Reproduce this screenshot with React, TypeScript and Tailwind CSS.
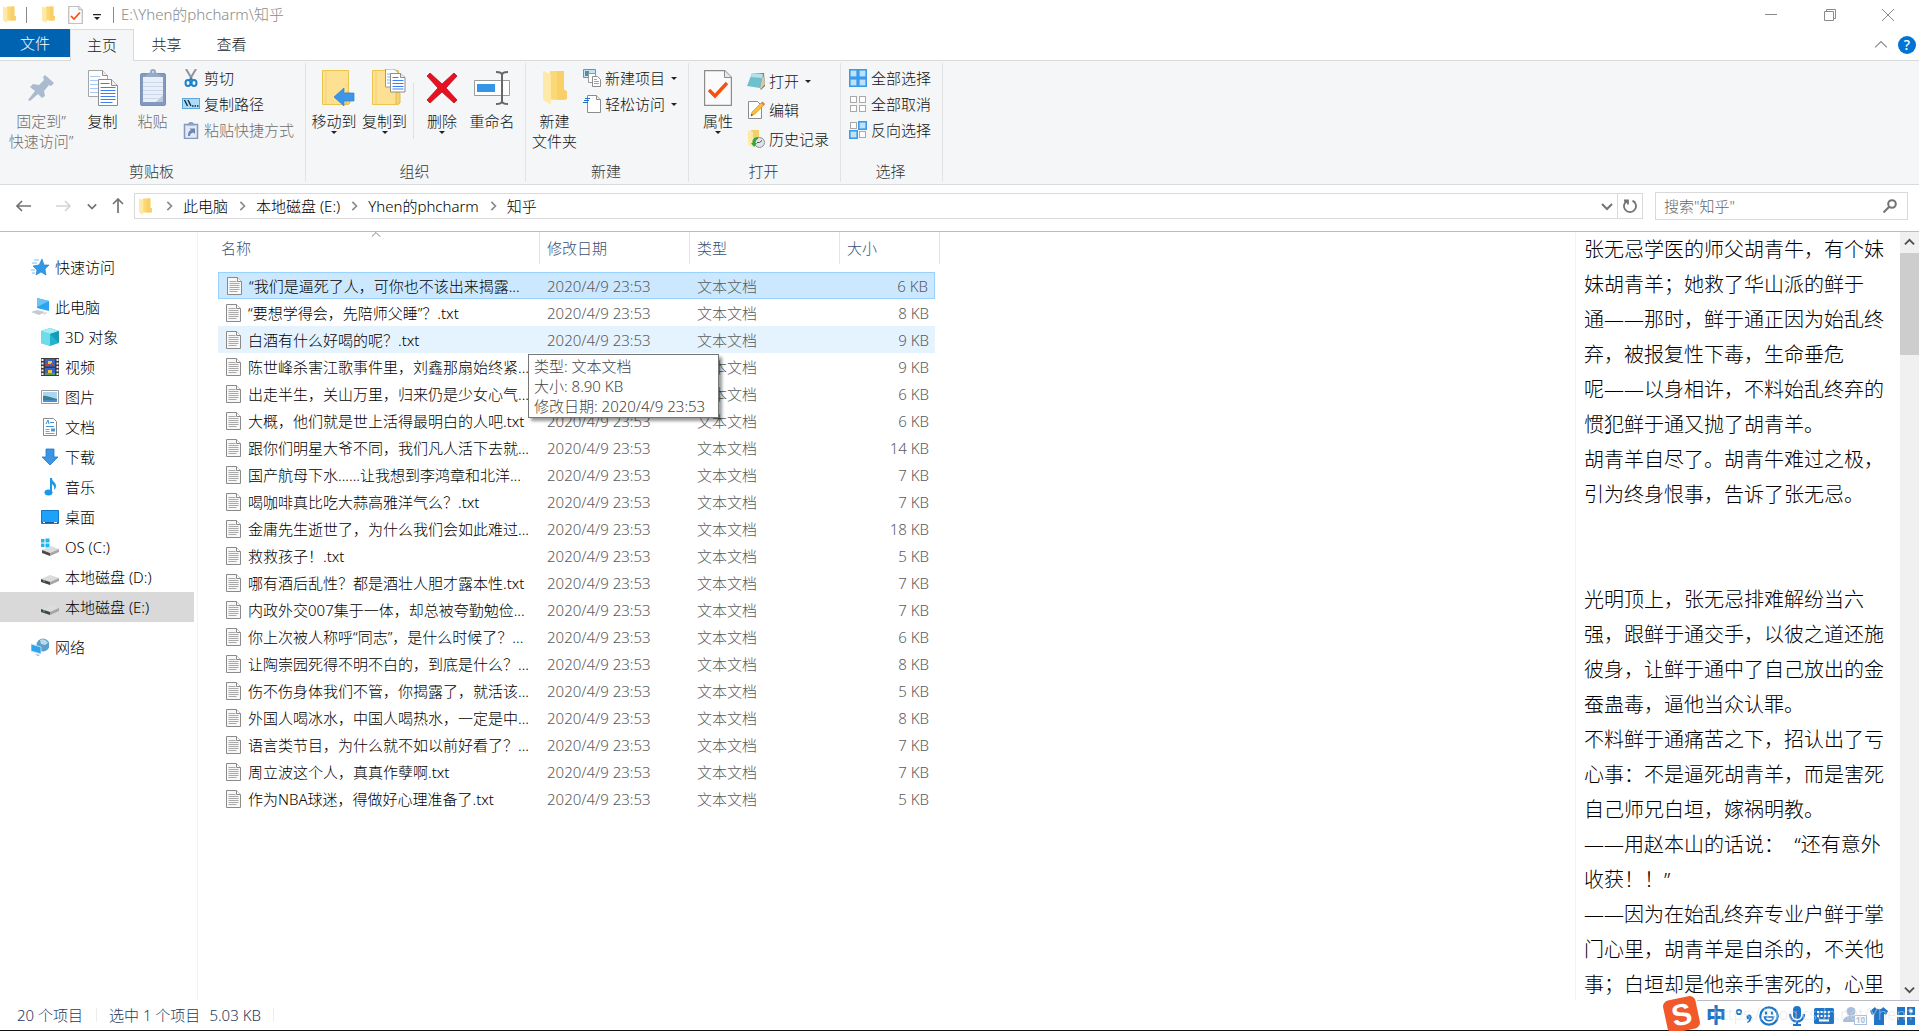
import type { ReactNode } from "react";

type FileRow = {
  name: string;
  size: number; // KB
  state?: "selected" | "hover";
};

const FILES: FileRow[] = [
  { name: "“我们是逼死了人，可你也不该出来揭露...", size: 6, state: "selected" },
  { name: "“要想学得会，先陪师父睡”？.txt", size: 8 },
  { name: "白酒有什么好喝的呢？.txt", size: 9, state: "hover" },
  { name: "陈世峰杀害江歌事件里，刘鑫那扇始终紧...", size: 9 },
  { name: "出走半生，关山万里，归来仍是少女心气...", size: 6 },
  { name: "大概，他们就是世上活得最明白的人吧.txt", size: 6 },
  { name: "跟你们明星大爷不同，我们凡人活下去就...", size: 14 },
  { name: "国产航母下水......让我想到李鸿章和北洋...", size: 7 },
  { name: "喝咖啡真比吃大蒜高雅洋气么？.txt", size: 7 },
  { name: "金庸先生逝世了，为什么我们会如此难过...", size: 18 },
  { name: "救救孩子！.txt", size: 5 },
  { name: "哪有酒后乱性？都是酒壮人胆才露本性.txt", size: 7 },
  { name: "内政外交007集于一体，却总被夸勤勉俭...", size: 7 },
  { name: "你上次被人称呼“同志”，是什么时候了？...", size: 6 },
  { name: "让陶崇园死得不明不白的，到底是什么？...", size: 8 },
  { name: "伤不伤身体我们不管，你揭露了，就活该...", size: 5 },
  { name: "外国人喝冰水，中国人喝热水，一定是中...", size: 8 },
  { name: "语言类节目，为什么就不如以前好看了？...", size: 7 },
  { name: "周立波这个人，真真作孽啊.txt", size: 7 },
  { name: "作为NBA球迷，得做好心理准备了.txt", size: 5 },
];

const MODIFIED = "2020/4/9 23:53";

const PREVIEW = `张无忌学医的师父胡青牛，有个妹
妹胡青羊；她救了华山派的鲜于
通——那时，鲜于通正因为始乱终
弃，被报复性下毒，生命垂危
呢——以身相许，不料始乱终弃的
惯犯鲜于通又抛了胡青羊。
胡青羊自尽了。胡青牛难过之极，
引为终身恨事，告诉了张无忌。


光明顶上，张无忌排难解纷当六
强，跟鲜于通交手，以彼之道还施
彼身，让鲜于通中了自己放出的金
蚕蛊毒，逼他当众认罪。
不料鲜于通痛苦之下，招认出了亏
心事：不是逼死胡青羊，而是害死
自己师兄白垣，嫁祸明教。
——用赵本山的话说：  “还有意外
收获！！”
——因为在始乱终弃专业户鲜于掌
门心里，胡青羊是自杀的，不关他
事；白垣却是他亲手害死的，心里`;

/* ---------- icons ---------- */

function FolderIcon({ className }: { className: string }) {
  return (
    <svg viewBox="0 0 24 34" preserveAspectRatio="none" className={className} aria-hidden="true">
      <path d="M7 1h14v18l3 2v7l-2 1H7z" fill="#fcd875" />
      <path d="M14 1h7v18l3 2v7l-2 1h-8z" fill="#f8cf68" />
      <path d="M0 1l8 3v30l-8-5z" fill="#ffe9a9" />
    </svg>
  );
}

function CheckDoc({ className }: { className: string }) {
  return (
    <svg viewBox="0 0 28 36" className={className} aria-hidden="true">
      <path d="M.5.5h20l7 7v28H.5z" fill="#fbfbfb" stroke="#8c8c8c" strokeWidth="1.4" />
      <path d="M20.5.5v7h7" fill="#e8e8e8" stroke="#8c8c8c" />
      <path d="M5 20l6 6 12-13" fill="none" stroke="#f4500f" strokeWidth="3.4" />
    </svg>
  );
}

function TextFileIcon() {
  return (
    <svg viewBox="0 0 15 18" className="h-[18px] w-[15px] shrink-0" aria-hidden="true">
      <path d="M.5.5h10l4 4v13H.5z" fill="#f8f8f8" stroke="#8a8a8a" />
      <path d="M10.5.5v4h4" fill="#fff" stroke="#8a8a8a" />
      <path d="M2.500 4.500h7M2.500 6.500h10M2.500 8.500h10M2.500 10.500h10M2.500 12.500h10M2.500 14.500h8" stroke="#a9a9a9" />
    </svg>
  );
}

function PinIcon() {
  return (
    <svg viewBox="0 0 26 26" className="h-[26px] w-[26px]" aria-hidden="true">
      <path d="M17 0l9 8-3 3-2-1-5 6 1 5-3 2-4-4-8 7-2-1 7-9-5-4 3-3 6 1 5-5-1-3z" fill="#aabacf" />
    </svg>
  );
}

function CopyIcon() {
  return (
    <svg viewBox="0 0 30 36" className="h-9 w-[30px]" aria-hidden="true">
      <path d="M.5.5h14l5 5v21H.5z" fill="#fdfdfd" stroke="#a5a5a5" />
      <path d="M14.500.5v5h5" fill="#eee" stroke="#8c8c8c" />
      <path d="M2 6.500h10M2 10.500h9M2 14.500h8M2 18.500h8M2 22.500h8" stroke="#a9c8fa" />
      <path d="M10.500 9.500h13l6 6v20h-19z" fill="#fff" stroke="#8c8c8c" />
      <path d="M23.500 9.500v6h6" fill="#eee" stroke="#8c8c8c" />
      <path d="M12.500 13.500h9M12.500 17.500h15M12.500 20.500h15M12.500 23.500h15M12.500 26.500h15M12.500 29.500h15M12.500 32.500h12" stroke="#3f7ff5" />
    </svg>
  );
}

function PasteIcon() {
  return (
    <svg viewBox="0 0 26 37" className="h-[37px] w-[26px]" aria-hidden="true">
      <rect x=".5" y="4.500" width="25" height="32" rx="1.500" fill="#8399c0" stroke="#7b90b5" />
      <path d="M3 8h20v25H3z" fill="#e9eff8" />
      <path d="M3 13.500h20M3 17.500h20M3 21.500h20M3 25.500h20M3 29.500h20" stroke="#cbd8ea" />
      <path d="M16 33l7-7v7z" fill="#bccbe2" />
      <path d="M5 8c0-3 4-3 5-5a3 3 0 0 1 6 0c1 2 5 2 5 5z" fill="#98a9c6" />
      <circle cx="13" cy="3" r="1" fill="#dde5f2" />
    </svg>
  );
}

function ScissorsIcon() {
  return (
    <svg viewBox="0 0 18 18" className="h-[18px] w-[18px]" aria-hidden="true">
      <path d="M4 0l6 10M14 0L8 10" stroke="#8d949b" strokeWidth="2" />
      <ellipse cx="6" cy="14" rx="2.500" ry="3" fill="none" stroke="#1c82c9" strokeWidth="2" />
      <ellipse cx="12" cy="14" rx="2.500" ry="3" fill="none" stroke="#1c82c9" strokeWidth="2" />
      <path d="M7 11l2-3 2 3z" fill="#1c82c9" />
    </svg>
  );
}

function CopyPathIcon() {
  return (
    <svg viewBox="0 0 18 18" className="h-[18px] w-[18px]" aria-hidden="true">
      <rect x=".5" y="3.500" width="17" height="10" fill="#a9dcfb" stroke="#5ea7d6" />
      <path d="M2.500 5l3 6M6 5l3 6" stroke="#1d2b38" strokeWidth="1.400" />
      <path d="M10 11h1.500M12.500 11H14M15 11h1.500" stroke="#1d2b38" strokeWidth="1.500" />
    </svg>
  );
}

function PasteShortcutIcon() {
  return (
    <svg viewBox="0 0 18 18" className="h-[18px] w-[18px]" aria-hidden="true">
      <path d="M2.500 3.500h13v14h-13z" fill="#e3eaf5" stroke="#8399c0" strokeWidth="1.500" />
      <path d="M5 4.500C5 2 7 3 7.500 1h3C11 3 13 2 13 4.500z" fill="#8ba0c4" />
      <path d="M6 15c0-4 1-5 3-6L7.500 7.500H13V13l-1.500-1.500C9 12 8 13 8 15z" fill="#6c86b3" />
    </svg>
  );
}

function BigFolder() {
  return (
    <>
      <path d="M.5 1.500h26v23l-1 1v10H.5z" fill="#fde092" stroke="#ecc64c" />
      <path d="M4 2v33" stroke="#f3d275" />
      <path d="M24 35V25c0-3 4-3 4 0v9l-2 1.500z" fill="#f7d272" stroke="#e5bd48" />
    </>
  );
}

function MoveToIcon() {
  return (
    <svg viewBox="-10 0 44 38" className="h-[38px] w-[44px]" aria-hidden="true">
      <BigFolder />
      <path d="M12 28l10-9v5h10v8H22v5z" fill="#3d97e8" stroke="#2b82d2" strokeWidth=".7" />
    </svg>
  );
}

function CopyToIcon() {
  return (
    <svg viewBox="-8 0 42 38" className="h-[38px] w-[42px]" aria-hidden="true">
      <BigFolder />
      <g transform="translate(13 -1)">
        <path d="M.5 1h9l4 4v14H.5z" fill="#fff" stroke="#9a9a9a" />
        <path d="M2 6h6M2 9h5M2 12h4M2 15h4" stroke="#7fb0f8" />
        <path d="M5.500 5.500h10l4.500 4v14.500H5.500z" fill="#fff" stroke="#8c8c8c" />
        <path d="M15.500 5.500v4H20" fill="#eee" stroke="#8c8c8c" />
        <path d="M7.500 9.500h6M7.500 12.500h11M7.500 15.500h11M7.500 18.500h11M7.500 21h11" stroke="#3f7ff5" />
      </g>
    </svg>
  );
}

function DeleteIcon() {
  return (
    <svg viewBox="0 0 32 32" className="h-8 w-8" aria-hidden="true">
      <path d="M4 1l12 11L28 1l3 3-11 12 11 12-3 3-12-11L4 31l-3-3 11-12L1 4z" fill="#e81123" stroke="#b5101c" strokeWidth=".8" />
    </svg>
  );
}

function RenameIcon() {
  return (
    <svg viewBox="0 0 36 34" className="h-[34px] w-9" aria-hidden="true">
      <path d="M.5 9.500h35v15H.5z" fill="#fff" stroke="#9b9b9b" />
      <path d="M3 13h18v8H3z" fill="#3795e6" />
      <path d="M28 3v28M22 1c4 0 6 1 6 3 0-2 2-3 6-3M22 33c4 0 6-1 6-3 0 2 2 3 6 3" fill="none" stroke="#686868" strokeWidth="2" />
    </svg>
  );
}

function NewItemIcon() {
  return (
    <svg viewBox="0 0 18 18" className="h-[18px] w-[18px]" aria-hidden="true">
      <path d="M.5.5h12v8H.5z" fill="#bfe3f7" stroke="#4a9bc9" />
      <path d="M2 2h4v5H2z" fill="#5b8d8a" />
      <path d="M5.500 4.500h7v9h-7z" fill="#fff" stroke="#9a9a9a" />
      <path d="M9.500 7.500h5l3 3v7h-8z" fill="#fff" stroke="#8c8c8c" />
      <path d="M11 10.500h3M11 12.500h5M11 14.500h5" stroke="#7fa9ee" />
    </svg>
  );
}

function EasyAccessIcon() {
  return (
    <svg viewBox="0 0 18 18" className="h-[18px] w-[18px]" aria-hidden="true">
      <path d="M4.500.5h9l4 4v13h-13z" fill="#fff" stroke="#8c8c8c" />
      <path d="M13.500.5v4h4" fill="#eee" stroke="#8c8c8c" />
      <path d="M2 3.500h5M1 5.500h5M0 7.500h5" stroke="#1d72c2" />
    </svg>
  );
}

function OpenIcon() {
  return (
    <svg viewBox="0 0 18 18" className="h-[18px] w-[18px]" aria-hidden="true">
      <path d="M5 1h12l1 13-4 4z" fill="#6f7c80" />
      <path d="M5 1l11 1-3 14-13-2z" fill="#6fc0cf" />
      <path d="M5 1l11 1-1 4L4 5z" fill="#b5e2e9" />
      <path d="M16 2l2 10-4 5-1-1z" fill="#d8c9a4" />
    </svg>
  );
}

function EditIcon() {
  return (
    <svg viewBox="0 0 18 18" className="h-[18px] w-[18px]" aria-hidden="true">
      <path d="M1.500.5h9l4 4v13h-13z" fill="#fff" stroke="#8c8c8c" />
      <path d="M4 15l1-4 9-9 3 2-9 9z" fill="#f7bf3b" stroke="#c98d1a" strokeWidth=".6" />
      <path d="M14 2l1.500-1.500L18 3l-1 1.500z" fill="#e2726f" />
      <path d="M4 15l.5-2 1.500 1z" fill="#333" />
    </svg>
  );
}

function HistoryIcon() {
  return (
    <svg viewBox="0 0 18 18" className="h-[18px] w-[18px]" aria-hidden="true">
      <path d="M4 0h8v14H4z" fill="#f6cf68" />
      <path d="M1 0l5 2v15l-5-2z" fill="#ffe9a9" />
      <circle cx="12.500" cy="12.500" r="5" fill="#dfe3e6" stroke="#8a8f93" />
      <path d="M12.500 12.500l2.500-2M12.500 12.500H10" stroke="#555" />
      <path d="M11 7c-4 0-6 3-5.500 6H4l3 4 3-4H8.500c0-2 .5-3 2.500-4z" fill="#2fa83c" />
    </svg>
  );
}

// cells: true = highlighted square, order tl, tr, bl, br
function SelectIcon({ cells }: { cells: boolean[] }) {
  return (
    <svg viewBox="0 0 18 18" className="h-[18px] w-[18px]" aria-hidden="true">
      {cells.map((on, i) => {
        const x = (i % 2) * 9;
        const y = Math.floor(i / 2) * 9;
        return on ? (
          <rect key={i} x={x + 0.8} y={y + 0.8} width="7.400" height="7.400" fill="#bfe2fb" stroke="#3c9be8" strokeWidth="1.600" />
        ) : (
          <rect key={i} x={x + 1.5} y={y + 1.5} width="6" height="6" fill="#fdfdfd" stroke="#a9a9a9" />
        );
      })}
    </svg>
  );
}

function Caret() {
  return (
    <svg viewBox="0 0 6 3" className="h-[3px] w-[6px] shrink-0" aria-hidden="true">
      <path d="M0 0h6L3 3z" fill="#222" />
    </svg>
  );
}

function Chevron({ className, dir }: { className: string; dir: "up" | "down" | "right" }) {
  const d = { up: "M1 8l5-5 5 5", down: "M1 4l5 5 5-5", right: "M4 1l5 5-5 5" }[dir];
  return (
    <svg viewBox="0 0 12 12" className={className} fill="none" stroke="currentColor" aria-hidden="true">
      <path d={d} />
    </svg>
  );
}

const NAV_ICONS: Record<string, ReactNode> = {
  star: (
    <>
      <path d="M11 1l2 6 5 0-4 4 1 6-5-3-5 3 1-5-4-4 6-1z" fill="#2f9ae8" stroke="#1a7ac4" strokeWidth=".6" />
      <path d="M3 2h5M1 5h5M0 12h4M1 15h3" stroke="#7dbdf0" />
    </>
  ),
  pc: (
    <>
      <path d="M6 0l12 3v10L6 10z" fill="#2ea3ee" />
      <path d="M6 0l12 3-12 6z" fill="#6bc3f7" />
      <path d="M0 14l6-2 8 2-6 3z" fill="#c3cad1" />
      <path d="M11 15l4-1 2 1-4 2z" fill="#dde1e5" />
    </>
  ),
  cube: (
    <>
      <path d="M9 0l9 3v12l-9 3-9-3V3z" fill="#24b3cd" />
      <path d="M0 3l9 3v12l-9-3z" fill="#6fdcea" />
      <path d="M0 3l9-3 9 3-9 3z" fill="#a6eef4" />
      <path d="M9 6l9-3v12z" fill="#159bb9" />
    </>
  ),
  video: (
    <>
      <path d="M0 0h18v18H0z" fill="#3b3b3b" />
      <path d="M1.500 1v16M16.500 1v16" stroke="#f2f2f2" strokeWidth="2" strokeDasharray="2 1.500" />
      <path d="M4 1h10v7.500H4zM4 10h10v7H4z" fill="#3a63c9" />
      <path d="M7 3h4v3H7z" fill="#f0c63a" />
      <path d="M5 6h3v2H5zM10 5h3v3h-3z" fill="#cf3c2c" />
      <path d="M7 12h4v3H7z" fill="#f0c63a" />
      <path d="M4 15h10v2H4z" fill="#5d9b46" />
    </>
  ),
  picture: (
    <>
      <path d="M.5 2.500h17v13H.5z" fill="#fff" stroke="#9a9a9a" />
      <path d="M2 4h14v10H2z" fill="#a9d6f5" />
      <path d="M2 8c4-1 8 2 14 3v3H2z" fill="#3c7f8d" />
      <path d="M2 12h14v2H2z" fill="#4b8fd0" />
    </>
  ),
  doc: (
    <>
      <path d="M2.500.5h10l3 3v14h-13z" fill="#fff" stroke="#8a8a8a" />
      <path d="M5 6l2-4 1 4M9 4.500h4M5 8.500h8" fill="none" stroke="#3a8fd8" />
      <path d="M4.500 11.500h4M4.500 13.500h4M4.500 15.500h9" stroke="#9a9a9a" />
      <path d="M10 10.500h4v3h-4z" fill="#4b9bd8" />
    </>
  ),
  down: <path d="M5 1h8v8h4l-8 8-8-8h4z" fill="#3b95e6" stroke="#2277c8" strokeWidth=".8" />,
  music: (
    <>
      <path d="M9 0h2c0 4 4 4 4 8 0 2-1 3-2 4 1-4-1-5-2-6v8H9z" fill="#1d97ee" />
      <ellipse cx="7.500" cy="14.500" rx="4" ry="3" fill="#1d97ee" />
    </>
  ),
  desktop: (
    <>
      <path d="M.5 2.500h17v13H.5z" fill="#1ea1fb" stroke="#1479c7" />
      <path d="M1 14.500h16" stroke="#0b5c9e" />
      <path d="M2 14.500h2M13 14.500h3" stroke="#fff" />
    </>
  ),
  os: (
    <>
      <path d="M0 1h3.500v3.500H0zM4.500.5H8.500v4h-4zM0 5.500h3.500V9H0zM4.500 5.500h4v4h-4z" fill="#1cb6f0" />
      <path d="M1 12l9-4 8 3-9 4z" fill="#dcdcdc" />
      <path d="M1 12l8 3v3l-8-3z" fill="#4b4b4b" />
      <path d="M9 15l9-4v3l-9 4z" fill="#a6a6a6" />
    </>
  ),
  disk: (
    <>
      <path d="M0 11l9-4 9 3-9 4z" fill="#dcdcdc" />
      <path d="M0 11l9 3v3l-9-3z" fill="#444" />
      <path d="M9 14l9-4v3l-9 4z" fill="#a6a6a6" />
      <path d="M2 13h2" stroke="#59c86a" />
    </>
  ),
  network: (
    <>
      <circle cx="12" cy="7" r="6.500" fill="#5aa0c8" />
      <path d="M9 2c3-2 6 0 8 3l-3 2-4-1z" fill="#b8dcea" />
      <path d="M0 6l10 3v7L0 13z" fill="#2ea3ee" stroke="#cfe6f5" strokeWidth=".8" />
      <path d="M4 16l5 1-2 1z" fill="#9aa3aa" />
    </>
  ),
};

type NavItem = { icon: string; label: string; root?: boolean; current?: boolean; gap?: boolean };

const NAV: NavItem[] = [
  { icon: "star", label: "快速访问", root: true },
  { icon: "pc", label: "此电脑", root: true, gap: true },
  { icon: "cube", label: "3D 对象" },
  { icon: "video", label: "视频" },
  { icon: "picture", label: "图片" },
  { icon: "doc", label: "文档" },
  { icon: "down", label: "下载" },
  { icon: "music", label: "音乐" },
  { icon: "desktop", label: "桌面" },
  { icon: "os", label: "OS (C:)" },
  { icon: "disk", label: "本地磁盘 (D:)" },
  { icon: "disk", label: "本地磁盘 (E:)", current: true },
  { icon: "network", label: "网络", root: true, gap: true },
];

/* ---------- ribbon ---------- */

function BigButton({ icon, lines, caret, disabled, width }: {
  icon: ReactNode;
  lines: string[];
  caret?: boolean;
  disabled?: boolean;
  width: string;
}) {
  return (
    <button
      type="button"
      disabled={disabled}
      className={`flex shrink-0 flex-col items-center self-start whitespace-nowrap leading-5 ${width} ${disabled ? "text-[#6d6d6d]" : "text-[#111]"}`}
    >
      <span className="mb-[3px] flex h-[41px] items-center justify-center">{icon}</span>
      {lines.map((l) => (
        <span key={l}>{l}</span>
      ))}
      {caret && <Caret />}
    </button>
  );
}

function SmallButton({ icon, label, caret, disabled }: {
  icon: ReactNode;
  label: string;
  caret?: boolean;
  disabled?: boolean;
}) {
  return (
    <button
      type="button"
      disabled={disabled}
      className={`flex items-center gap-1 whitespace-nowrap leading-5 ${disabled ? "text-[#6d6d6d]" : "text-[#111]"}`}
    >
      {icon}
      {label}
      {caret && <span className="pl-[2px]"><Caret /></span>}
    </button>
  );
}

function RibbonGroup({ title, width, children }: { title: string; width: string; children: ReactNode }) {
  return (
    <section aria-label={title} className={`my-[2px] flex shrink-0 flex-col border-r border-[#e2e3e4] ${width}`}>
      <div className="flex flex-1 pt-1">{children}</div>
      <h2 className="pb-[1px] pr-[2px] text-center leading-5 text-[#333]">{title}</h2>
    </section>
  );
}

function Ribbon() {
  return (
    <div className="flex h-[124px] shrink-0 border-b border-[#d9dadb] bg-[#f5f6f7]">
      <RibbonGroup title="剪贴板" width="w-[306px]">
        <BigButton icon={<PinIcon />} lines={["固定到”", "快速访问”"]} width="w-[82px]" disabled />
        <BigButton icon={<CopyIcon />} lines={["复制"]} width="w-[41px]" />
        <BigButton icon={<PasteIcon />} lines={["粘贴"]} width="w-[59px]" disabled />
        <div className="flex flex-col gap-[6px] pt-px">
          <SmallButton icon={<ScissorsIcon />} label="剪切" />
          <SmallButton icon={<CopyPathIcon />} label="复制路径" />
          <SmallButton icon={<PasteShortcutIcon />} label="粘贴快捷方式" disabled />
        </div>
      </RibbonGroup>

      <RibbonGroup title="组织" width="w-[220px]">
        <BigButton icon={<MoveToIcon />} lines={["移动到"]} width="w-[56px]" caret />
        <BigButton icon={<CopyToIcon />} lines={["复制到"]} width="w-[45px]" caret />
        <div className="mx-[6px] mt-4 h-14 w-px bg-[#dfe0e1]" />
        <BigButton icon={<DeleteIcon />} lines={["删除"]} width="w-[44px]" caret />
        <BigButton icon={<RenameIcon />} lines={["重命名"]} width="w-[56px]" />
      </RibbonGroup>

      <RibbonGroup title="新建" width="w-[163px]">
        <BigButton icon={<FolderIcon className="h-[35px] w-6" />} lines={["新建", "文件夹"]} width="w-[57px]" />
        <div className="flex flex-col gap-[6px] pt-px">
          <SmallButton icon={<NewItemIcon />} label="新建项目" caret />
          <SmallButton icon={<EasyAccessIcon />} label="轻松访问" caret />
        </div>
      </RibbonGroup>

      <RibbonGroup title="打开" width="w-[152px]">
        <BigButton icon={<CheckDoc className="h-9 w-7" />} lines={["属性"]} width="w-[58px]" caret />
        <div className="flex flex-col gap-[9px] pt-1">
          <SmallButton icon={<OpenIcon />} label="打开" caret />
          <SmallButton icon={<EditIcon />} label="编辑" />
          <SmallButton icon={<HistoryIcon />} label="历史记录" />
        </div>
      </RibbonGroup>

      <RibbonGroup title="选择" width="w-[102px]">
        <div className="flex flex-col gap-[6px] pl-2 pt-px">
          <SmallButton icon={<SelectIcon cells={[true, true, true, true]} />} label="全部选择" />
          <SmallButton icon={<SelectIcon cells={[false, false, false, false]} />} label="全部取消" />
          <SmallButton icon={<SelectIcon cells={[false, true, true, false]} />} label="反向选择" />
        </div>
      </RibbonGroup>
    </div>
  );
}

/* ---------- window chrome ---------- */

function TitleBar() {
  return (
    <header className="flex h-[29px] shrink-0 items-center">
      <FolderIcon className="ml-[3px] h-[17px] w-[13px]" />
      <span className="ml-[10px] h-4 w-px bg-[#8a8a8a]" />
      <FolderIcon className="ml-[15px] h-[17px] w-[13px]" />
      <CheckDoc className="ml-[13px] h-[18px] w-[15px]" />
      <svg viewBox="0 0 8 6" className="ml-[10px] mt-1 h-[6px] w-2" aria-hidden="true">
        <path d="M0 0h8v1.200H0zM1 3h6L4 6z" fill="#222" />
      </svg>
      <span className="ml-3 h-4 w-px bg-[#8a8a8a]" />
      <h1 className="ml-[7px] text-[#8a8a8a]">E:\Yhen的phcharm\知乎</h1>
      <div className="ml-auto flex pr-[2px] text-[#8a8a8a]">
        <button type="button" aria-label="最小化" className="flex h-7 w-[58px] items-center justify-center">
          <span className="h-px w-3 bg-[#8a8a8a]" />
        </button>
        <button type="button" aria-label="还原" className="flex h-7 w-[59px] items-center justify-center">
          <svg viewBox="0 0 12 12" className="h-3 w-3" fill="none" stroke="currentColor" aria-hidden="true">
            <path d="M.5 2.500h9v9h-9zM2.500 2.500v-2h9v9h-2" />
          </svg>
        </button>
        <button type="button" aria-label="关闭" className="flex h-7 w-[58px] items-center justify-center">
          <svg viewBox="0 0 12 12" className="h-3 w-3" stroke="currentColor" aria-hidden="true">
            <path d="M0 0l12 12M12 0L0 12" />
          </svg>
        </button>
      </div>
    </header>
  );
}

function TabBar() {
  return (
    <nav aria-label="功能区" className="flex h-8 shrink-0 border-b border-[#d9dadb] text-[#222]">
      <button type="button" className="h-7 w-[70px] bg-[#0063b1] text-white">文件</button>
      <button type="button" className="-mb-px w-16 border border-b-0 border-[#d9dadb] bg-[#f5f6f7]">主页</button>
      <button type="button" className="w-[65px]">共享</button>
      <button type="button" className="w-[65px]">查看</button>
      <div className="ml-auto flex items-center gap-[10px] pr-[3px]">
        <button type="button" aria-label="最小化功能区">
          <Chevron dir="up" className="h-[14px] w-[14px] text-[#8a8a8a]" />
        </button>
        <button type="button" aria-label="帮助" className="flex h-[18px] w-[18px] items-center justify-center rounded-full bg-[#0074d4] text-sm font-medium leading-none text-white">
          ?
        </button>
      </div>
    </nav>
  );
}

function AddressBar() {
  const path = ["此电脑", "本地磁盘 (E:)", "Yhen的phcharm", "知乎"];
  return (
    <div className="flex h-[47px] shrink-0 items-center border-b border-[#bcbcbc] pb-1 pr-[11px]">
      <div className="flex w-[134px] shrink-0 items-center text-[#737373]">
        <button type="button" aria-label="后退" className="ml-4">
          <svg viewBox="0 0 16 12" className="h-3 w-4" fill="none" stroke="currentColor" strokeWidth="1.700" aria-hidden="true">
            <path d="M6 1L1 6l5 5M1 6h14" />
          </svg>
        </button>
        <button type="button" aria-label="前进" disabled className="ml-[23px] text-[#d4d4d4]">
          <svg viewBox="0 0 16 12" className="h-3 w-4" fill="none" stroke="currentColor" strokeWidth="1.700" aria-hidden="true">
            <path d="M10 1l5 5-5 5M15 6H1" />
          </svg>
        </button>
        <button type="button" aria-label="最近浏览的位置" className="ml-4">
          <Chevron dir="down" className="h-[10px] w-[10px] stroke-2" />
        </button>
        <button type="button" aria-label="上移" className="ml-[15px]">
          <svg viewBox="0 0 12 16" className="h-4 w-3" fill="none" stroke="currentColor" strokeWidth="1.700" aria-hidden="true">
            <path d="M1 6l5-5 5 5M6 1v14" />
          </svg>
        </button>
      </div>
      <div className="flex h-[26px] min-w-0 flex-1 items-center border border-[#d9d9d9]">
        <FolderIcon className="ml-1 mr-[3px] h-[17px] w-[13px]" />
        {path.map((p) => (
          <span key={p} className="flex items-center whitespace-nowrap">
            <Chevron dir="right" className="mx-[9px] h-[10px] w-[10px] stroke-2 text-[#8a8a8a]" />
            <a href="#" className="text-black">{p}</a>
          </span>
        ))}
        <button type="button" aria-label="上一个位置" className="ml-auto flex h-full w-[22px] items-center justify-center border-r border-[#d9d9d9] text-[#737373]">
          <Chevron dir="down" className="h-3 w-3 stroke-2" />
        </button>
        <button type="button" aria-label="刷新" className="flex h-full w-6 items-center justify-center text-[#737373]">
          <svg viewBox="0 0 14 14" className="h-[14px] w-[14px]" fill="none" stroke="currentColor" strokeWidth="1.800" aria-hidden="true">
            <path d="M9.500 1.600a6 6 0 1 1-5 0M1 1.500h4v4" />
          </svg>
        </button>
      </div>
      <label className="ml-3 flex h-7 w-[253px] shrink-0 items-center border border-[#d9d9d9] pl-2 pr-[10px]">
        <input
          type="search"
          aria-label="搜索"
          placeholder={'搜索"知乎"'}
          className="min-w-0 flex-1 bg-transparent outline-none placeholder:text-[#666]"
        />
        <svg viewBox="0 0 14 14" className="h-[14px] w-[14px] text-[#737373]" fill="none" stroke="currentColor" strokeWidth="2" aria-hidden="true">
          <circle cx="9" cy="5" r="3.800" />
          <path d="M6 8l-5.500 5.500" />
        </svg>
      </label>
    </div>
  );
}

/* ---------- panes ---------- */

function Sidebar() {
  return (
    <nav aria-label="导航窗格" className="w-[198px] shrink-0 border-r border-[#f3f3f3] pt-5">
      <ul>
        {NAV.map((n) => (
          <li key={n.label} className={n.gap ? "mt-[10px]" : ""}>
            <a
              href="#"
              className={`mr-[3px] flex h-[30px] items-center gap-[6px] text-black ${n.root ? "pl-[31px]" : "pl-[41px]"} ${n.current ? "bg-[#d9d9d9]" : ""}`}
            >
              <svg viewBox="0 0 18 18" className="h-[18px] w-[18px] shrink-0" aria-hidden="true">{NAV_ICONS[n.icon]}</svg>
              {n.label}
            </a>
          </li>
        ))}
      </ul>
    </nav>
  );
}

function Tooltip() {
  return (
    <div
      role="tooltip"
      className="absolute left-[310px] top-7 z-10 w-[191px] whitespace-nowrap border border-[#767676] bg-white py-[1px] pl-[5px] leading-5 text-[#444] shadow-[3px_3px_3px_rgba(0,0,0,0.4)]"
    >
      <p>类型: 文本文档</p>
      <p>大小: 8.90 KB</p>
      <p>修改日期: {MODIFIED}</p>
    </div>
  );
}

const ROW_STATE = {
  selected: "[&>td]:border-y [&>td]:border-[#99d1ff] [&>td]:bg-[#cce8ff] [&>td:first-child]:border-l [&>td:last-child]:border-r",
  hover: "[&>td]:bg-[#e5f3ff]",
};

function HeaderCell({ children, span, sorted }: { children: ReactNode; span?: number; sorted?: boolean }) {
  return (
    <th scope="col" colSpan={span} aria-sort={sorted ? "ascending" : undefined} className="relative p-0 text-left align-top font-light">
      {sorted && <Chevron dir="up" className="absolute left-[153px] top-[-2px] h-[10px] w-[10px] text-[#666]" />}
      <div className={`h-8 border-r border-[#e5e5e5] leading-8 ${sorted ? "pl-[3px]" : "pl-[7px]"}`}>{children}</div>
    </th>
  );
}

function FileList() {
  return (
    <div className="min-w-0 flex-1 pl-5">
      <table aria-label="知乎" className="w-[722px] table-fixed border-separate border-spacing-0">
        {/* the last narrow column keeps the header a little wider than the rows */}
        <colgroup>
          <col className="w-[322px]" />
          <col className="w-[150px]" />
          <col className="w-[150px]" />
          <col className="w-[95px]" />
          <col className="w-[5px]" />
        </colgroup>
        <thead>
          <tr className="h-10 text-[#3b5072]">
            <HeaderCell sorted>名称</HeaderCell>
            <HeaderCell>修改日期</HeaderCell>
            <HeaderCell>类型</HeaderCell>
            <HeaderCell span={2}>大小</HeaderCell>
          </tr>
        </thead>
        <tbody>
          {FILES.map((f) => (
            <tr key={f.name} className={`h-[27px] leading-5 text-[#5a5a5a] ${f.state ? ROW_STATE[f.state] : ""}`}>
              <td className="relative p-0 pl-2 text-black">
                <span className="flex items-center gap-[7px] whitespace-nowrap">
                  <TextFileIcon />
                  {f.name}
                </span>
                {f.state === "hover" && <Tooltip />}
              </td>
              <td className="p-0 pl-[7px]">{MODIFIED}</td>
              <td className="p-0 pl-[7px]">文本文档</td>
              <td className="p-0 pr-[6px] text-right">{f.size} KB</td>
            </tr>
          ))}
        </tbody>
      </table>
    </div>
  );
}

function PreviewPane() {
  return (
    <aside aria-label="预览窗格" className="flex w-[344px] shrink-0 border-l border-[#f3f3f3]">
      <p className="min-w-0 flex-1 overflow-hidden whitespace-pre pl-2 text-xl leading-[35px] text-black">{PREVIEW}</p>
      <div className="flex w-[19px] shrink-0 flex-col items-center bg-[#f0f0f0] text-[#505050]">
        <button type="button" aria-label="向上滚动" className="flex h-[21px] items-center">
          <Chevron dir="up" className="h-[11px] w-[11px] stroke-2" />
        </button>
        <span className="h-[102px] w-full bg-[#cdcdcd]" />
        <button type="button" aria-label="向下滚动" className="mt-auto flex h-[21px] items-center">
          <Chevron dir="down" className="h-[11px] w-[11px] stroke-2" />
        </button>
      </div>
    </aside>
  );
}

function InputMethodBar() {
  return (
    <div className="relative flex h-full w-[222px] items-center border-t border-[#b9bcc4] bg-white pl-[9px] text-[#1f76c8]">
      <span className="absolute -left-8 -top-[3px] flex h-[33px] w-[33px] -rotate-12 items-center justify-center rounded-md bg-[#f1582a] font-['Liberation_Sans',sans-serif] text-3xl font-bold leading-none text-white">
        S
      </span>
      <button type="button" className="w-5 text-xl font-black leading-none">中</button>
      <svg viewBox="0 0 18 18" className="ml-[9px] h-[18px] w-[18px]" aria-hidden="true">
        <circle cx="4" cy="5" r="2.200" fill="none" stroke="currentColor" strokeWidth="1.800" />
        <circle cx="14" cy="10" r="2.500" fill="currentColor" />
        <path d="M16.500 10c0 3-1 5-4 6l-.5-1c2-1 2-2 2-4z" fill="currentColor" />
      </svg>
      <svg viewBox="0 0 20 20" className="ml-[6px] h-5 w-5" fill="none" stroke="currentColor" strokeWidth="2.200" aria-hidden="true">
        <circle cx="10" cy="10" r="8.700" />
        <path d="M5.500 11c1 5 8 5 9 0z" strokeWidth="1.600" />
        <path d="M7 5.500v3M13 5.500v3" />
      </svg>
      <svg viewBox="0 0 18 20" className="ml-[9px] h-5 w-[18px]" aria-hidden="true">
        <rect x="5" width="8" height="13" rx="4" fill="currentColor" />
        <path d="M2 8c0 10 14 10 14 0M9 15v4M5 19h8" fill="none" stroke="currentColor" strokeWidth="2.200" />
      </svg>
      <svg viewBox="0 0 20 16" className="ml-[8px] h-4 w-5" aria-hidden="true">
        <rect width="20" height="16" rx="1.500" fill="currentColor" />
        <path d="M3 4h14M3 8h14" stroke="#fff" strokeWidth="2" strokeDasharray="2 1.600" />
        <path d="M5 12.500h10" stroke="#fff" strokeWidth="2" />
      </svg>
      <span className="relative ml-[9px] h-[18px] w-5">
        <svg viewBox="0 0 20 18" className="h-[18px] w-5" fill="#a9bedb" aria-hidden="true">
          <circle cx="8" cy="4.500" r="4.500" />
          <path d="M0 15c0-5 4-6 8-6s8 1 8 6z" />
        </svg>
        <span className="absolute -right-1 bottom-0 border border-[#a9bedb] bg-white px-px text-[8px] font-bold leading-none text-[#a9bedb]">10</span>
      </span>
      <svg viewBox="0 0 18 18" className="ml-[7px] h-[18px] w-[18px]" aria-hidden="true">
        <path d="M5 0c1 3 7 3 8 0l5 4-2 4-2-1v11H4V7L2 8 0 4z" fill="currentColor" />
      </svg>
      <svg viewBox="0 0 18 18" className="ml-[9px] h-[18px] w-[18px]" aria-hidden="true">
        <path d="M0 0h8v8H0zM0 10h8v8H0zM10 10h8v8h-8z" fill="currentColor" />
        <path d="M11.200 1.200h5.600v5.600h-5.600z" fill="none" stroke="currentColor" strokeWidth="2.400" />
      </svg>
      <span className="pointer-events-none absolute left-4 top-[3px] whitespace-nowrap text-base leading-5 text-[#dcdcdc]/60">
        https://blog.csdn.net/Yhen1
      </span>
    </div>
  );
}

function StatusBar() {
  return (
    <footer className="flex h-[31px] shrink-0 items-center border-b border-[#111] text-[#1e395b]">
      <span className="ml-[17px] w-20 border-r border-[#ededed] leading-[14px]">20 个项目</span>
      <span className="ml-3 leading-[14px]">选中 1 个项目</span>
      <span className="ml-[9px] border-r border-[#ededed] pr-3 leading-[14px]">5.03 KB</span>
      <div className="ml-auto h-full">
        <InputMethodBar />
      </div>
    </footer>
  );
}

export default function App() {
  return (
    <div className="flex h-screen flex-col overflow-hidden bg-white font-['Noto_Sans','Noto_Sans_CJK_SC',sans-serif] text-[15px] font-light">
      <TitleBar />
      <TabBar />
      <Ribbon />
      <AddressBar />
      <main className="flex min-h-0 flex-1">
        <Sidebar />
        <FileList />
        <PreviewPane />
      </main>
      <StatusBar />
    </div>
  );
}
